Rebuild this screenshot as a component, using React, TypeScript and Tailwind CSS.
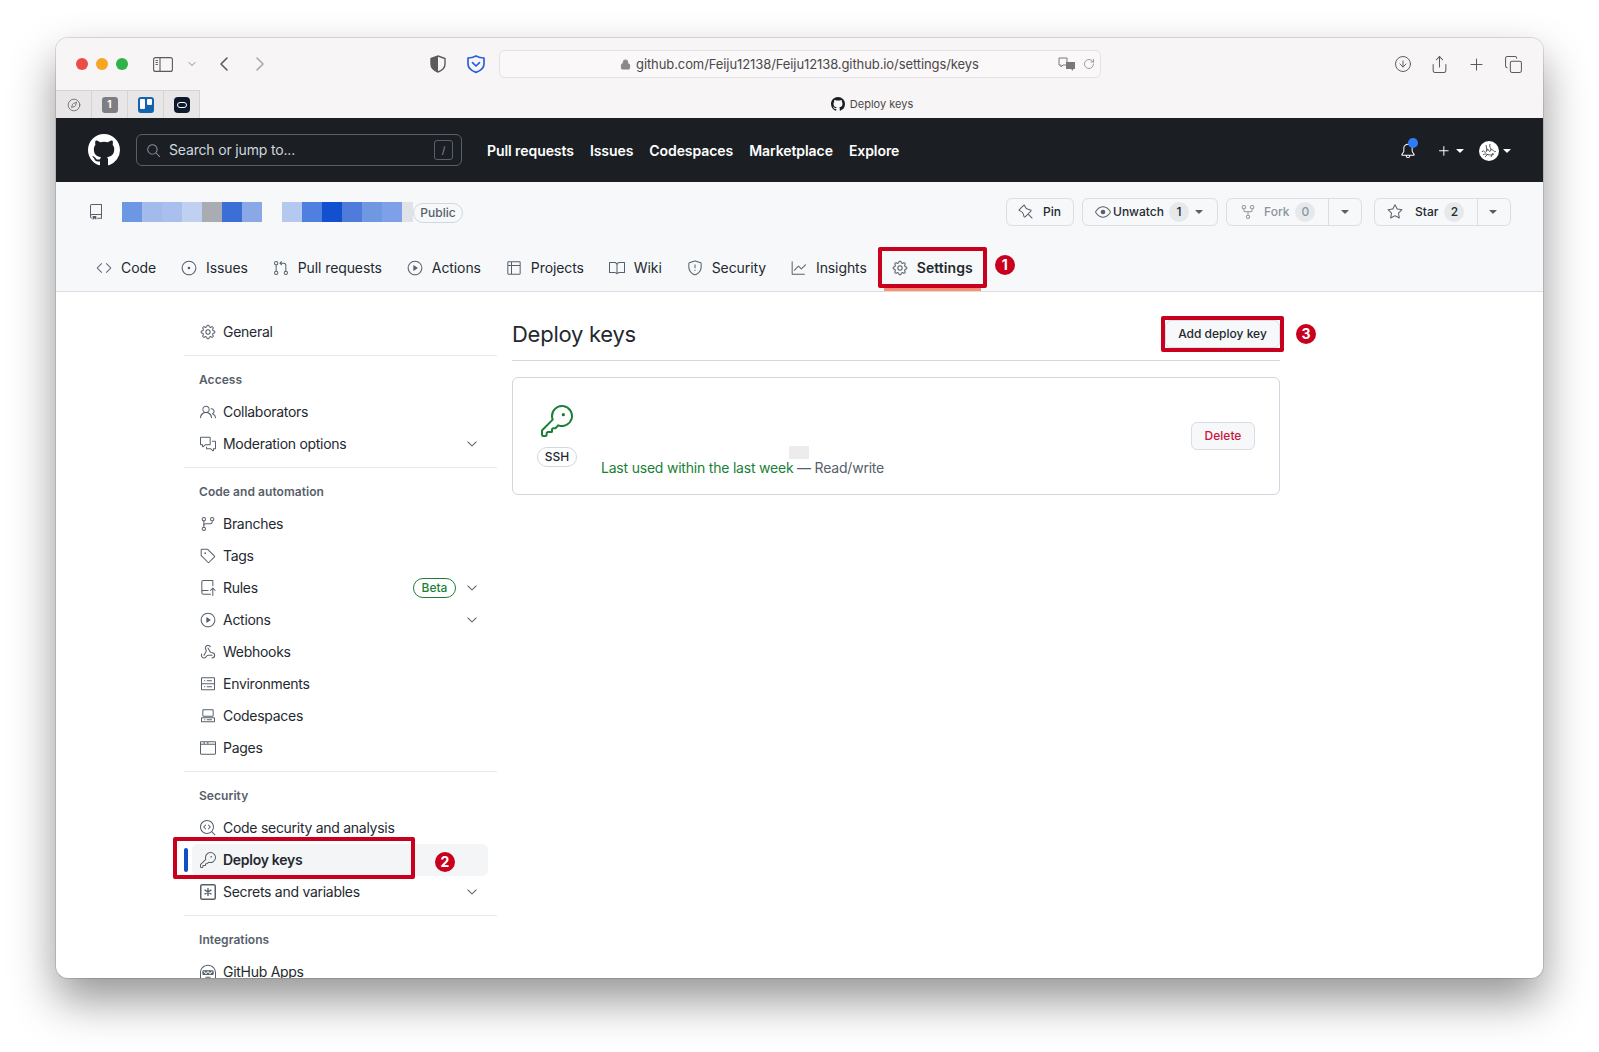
import type { ElementType, ReactNode } from "react";
import { ChevronLeft, ChevronRight, ChevronDown, CircleArrowDown, Share, Plus, Copy, Lock, RotateCw, Compass, Webhook } from "lucide-react";
import {
  GoSearch, GoBell, GoPlus, GoTriangleDown, GoRepo, GoPin, GoEye, GoRepoForked, GoStar,
  GoCode, GoIssueOpened, GoGitPullRequest, GoPlay, GoTable, GoBook, GoShield, GoGraph, GoGear,
  GoPeople, GoCommentDiscussion, GoGitBranch, GoTag, GoRepoPush, GoServer, GoCodespaces, GoBrowser,
  GoCodescan, GoKey, GoHubot, GoChevronDown,
} from "react-icons/go";

const blurOne = ["bg-[#6d97e2]", "bg-[#a3bbea]", "bg-[#a9c0ee]", "bg-[#c0d0f0]", "bg-[#a9adb3]", "bg-[#3c6fd6]", "bg-[#8aa8e6]"];
const blurTwo = ["bg-[#b4c8f0]", "bg-[#4f7fdf]", "bg-[#1350d0]", "bg-[#4f7bdb]", "bg-[#6f97e2]", "bg-[#7da0e8]"];

const tabs = [
  { label: "Code", icon: GoCode },
  { label: "Issues", icon: GoIssueOpened },
  { label: "Pull requests", icon: GoGitPullRequest },
  { label: "Actions", icon: GoPlay },
  { label: "Projects", icon: GoTable },
  { label: "Wiki", icon: GoBook },
  { label: "Security", icon: GoShield },
  { label: "Insights", icon: GoGraph },
];

function GithubMark({ size, className }: { size: number; className?: string }) {
  return (
    <svg viewBox="0 0 16 16" width={size} height={size} fill="currentColor" className={className}>
      <path d="M8 0C3.58 0 0 3.58 0 8c0 3.54 2.29 6.53 5.47 7.59.4.07.55-.17.55-.38 0-.19-.01-.82-.01-1.49-2.01.37-2.53-.49-2.69-.94-.09-.23-.48-.94-.82-1.13-.28-.15-.68-.52-.01-.53.63-.01 1.08.58 1.23.82.72 1.21 1.87.87 2.33.66.07-.52.28-.87.51-1.07-1.78-.2-3.64-.89-3.64-3.95 0-.87.31-1.59.82-2.15-.08-.2-.36-1.02.08-2.12 0 0 .67-.21 2.2.82.64-.18 1.32-.27 2-.27.68 0 1.36.09 2 .27 1.53-1.04 2.2-.82 2.2-.82.44 1.1.16 1.92.08 2.12.51.56.82 1.27.82 2.15 0 3.07-1.87 3.75-3.65 3.95.29.25.54.73.54 1.48 0 1.07-.01 1.93-.01 2.2 0 .21.15.46.55.38A8.013 8.013 0 0016 8c0-4.42-3.58-8-8-8z" />
    </svg>
  );
}

function KeyAsterisk({ size, className }: { size: number; className?: string }) {
  return (
    <svg viewBox="0 0 16 16" width={size} height={size} fill="none" stroke="currentColor" className={className}>
      <rect x="0.75" y="0.75" width="14.5" height="14.5" rx="1.5" strokeWidth="1.5" />
      <path d="M8 4.5v7M5 6.2l6 3.6M11 6.2l-6 3.6" strokeWidth="1.4" strokeLinecap="round" />
    </svg>
  );
}

function WebhookIcon({ size, className }: { size: number; className?: string }) {
  return <Webhook size={size} strokeWidth={1.6} className={className} />;
}

function Badge({ n, className }: { n: number; className: string }) {
  return (
    <span className={`absolute flex h-5 w-5 items-center justify-center rounded-full bg-[#c8001e] text-[14px] leading-none font-bold tracking-normal text-white ${className}`}>
      {n}
    </span>
  );
}

function Counter({ n, muted }: { n: number; muted?: boolean }) {
  return (
    <span className={`flex h-5 w-5 items-center justify-center rounded-full bg-[#e6e9ec] text-[12px] font-medium ${muted ? "text-[#8c959f]" : "text-[#24292f]"}`}>
      {n}
    </span>
  );
}

function SideRow({ icon: Icon, label, chevron, beta }: { icon: ElementType; label: string; chevron?: boolean; beta?: boolean }) {
  return (
    <div className="mr-[9px] ml-2 flex h-8 items-center gap-[7px] px-2 text-[14px] tracking-[-0.02em] text-[#24292f]">
      <Icon size={16} className="shrink-0 text-[#57606a]" />
      <span className="-mt-[2px]">{label}</span>
      {beta && (
        <span className="ml-auto flex h-5 w-[43px] items-center justify-center rounded-full border border-[#1a7f37] text-[12px] font-medium tracking-normal text-[#1a7f37]">Beta</span>
      )}
      {chevron && <GoChevronDown size={16} className={`${beta ? "ml-[1px]" : "ml-auto"} shrink-0 text-[#57606a]`} />}
    </div>
  );
}

function SideGroup({ title, children, last }: { title?: string; children: ReactNode; last?: boolean }) {
  return (
    <div className={last ? "" : "border-b border-[#e6e9ec] pb-[7px]"}>
      {title && <div className="ml-2 h-10 pt-[14px] pl-[7px] text-[12px] leading-[20px] font-semibold tracking-[0.005em] text-[#57606a]">{title}</div>}
      {children}
    </div>
  );
}

export default function App() {
  return (
    <div className="min-h-[1052px] bg-white pt-[38px] pl-[56px] font-['Inter','Liberation_Sans',sans-serif] antialiased">
      <div className="h-[940px] w-[1487px] overflow-hidden rounded-[12px] bg-white shadow-[0_22px_45px_rgba(0,0,0,0.42),0_0_0_1px_rgba(0,0,0,0.12)]">
        {/* safari toolbar */}
        <div className="flex h-[52px] items-center bg-[#f8f5f6] text-[#5c5a5b]">
          <div className="ml-5 flex gap-2">
            <span className="h-3 w-3 rounded-full bg-[#ee4b47]" />
            <span className="h-3 w-3 rounded-full bg-[#f5a623]" />
            <span className="h-3 w-3 rounded-full bg-[#2fb344]" />
          </div>
          <svg viewBox="0 0 20 15" fill="none" stroke="currentColor" className="ml-[25px] h-[15px] w-5">
            <rect x="0.6" y="0.6" width="18.8" height="13.8" rx="2" strokeWidth="1.1" />
            <path d="M7 0.6v13.8" strokeWidth="1.1" />
            <path d="M2.5 3.5h2.5M2.5 5.5h2.5M2.5 7.5h2.5" strokeWidth="0.9" />
          </svg>
          <ChevronDown size={12} strokeWidth={2} className="ml-[13px] text-[#8a8889]" />
          <ChevronLeft size={24} strokeWidth={1.6} className="ml-[14px]" />
          <ChevronRight size={24} strokeWidth={1.6} className="ml-[12px] text-[#a9a7a8]" />
          <svg viewBox="0 0 16 18" className="ml-[158px] h-[18px] w-4">
            <path d="M8 1 L15 3.5 V9 C15 13 12 15.5 8 17 C4 15.5 1 13 1 9 V3.5 Z" fill="none" stroke="#5c5a5b" strokeWidth="1.4" />
            <path d="M8 1 L1 3.5 V9 C1 13 4 15.5 8 17 Z" fill="#5c5a5b" />
          </svg>
          <svg viewBox="0 0 20 20" className="ml-[20px] h-5 w-5">
            <path d="M10 2 C13 3.6 15.5 4 18 4 V10 C18 14 14.5 16.8 10 18.4 C5.5 16.8 2 14 2 10 V4 C4.5 4 7 3.6 10 2 Z" fill="none" stroke="#2b5fd9" strokeWidth="1.7" strokeLinejoin="round" />
            <path d="M6.5 8.6 L10 12 L13.5 8.6" fill="none" stroke="#2b5fd9" strokeWidth="1.7" strokeLinecap="round" strokeLinejoin="round" />
          </svg>
          <div className="ml-[13px] flex h-[28px] w-[602px] shrink-0 items-center rounded-[6px] border border-[#e4e1e2] bg-[#faf8f8] text-[13px] tracking-[-0.007em] text-[#4a4849]">
            <Lock size={11} fill="#8a8889" className="ml-[120px] text-[#8a8889]" />
            <span className="mt-[2px] ml-[5px]">github.com/Feiju12138/Feiju12138.github.io/settings/keys</span>
            <svg viewBox="0 0 20 16" className="ml-auto h-4 w-5 text-[#7a7879]">
              <path d="M2 2 H10 V9 H6 L4 11 V9 H2 Z" fill="none" stroke="currentColor" strokeWidth="1" />
              <path d="M9 6 H18 V13 H16 V15 L14 13 H9 Z" fill="currentColor" />
            </svg>
            <RotateCw size={12} strokeWidth={1.4} className="mr-[5px] ml-[6px] text-[#7a7879]" />
          </div>
          <CircleArrowDown size={18} strokeWidth={1.3} className="ml-[293px]" />
          <Share size={19} strokeWidth={1.3} className="ml-[18px]" />
          <Plus size={19} strokeWidth={1.3} className="ml-[18px]" />
          <Copy size={19} strokeWidth={1.3} className="ml-[18px]" />
        </div>

        {/* favourites + tab title */}
        <div className="flex h-[28px] bg-[#f8f5f6]">
          <div className="flex">
            <div className="flex w-9 items-center justify-center border-t border-r border-[#d6d3d4] bg-[#e8e6e6]">
              <Compass size={14} strokeWidth={1.3} className="text-[#5c5a5b]" />
            </div>
            <div className="flex w-9 items-center justify-center border-t border-r border-[#d6d3d4] bg-[#e8e6e6]">
              <span className="flex h-4 w-4 items-center justify-center rounded-[3px] bg-[#7e7e82] text-[10px] font-bold text-white">1</span>
            </div>
            <div className="flex w-9 items-center justify-center border-t border-r border-[#d6d3d4] bg-[#e8e6e6]">
              <span className="flex h-4 w-4 gap-[2px] rounded-[3px] bg-[#1264b0] p-[2px]">
                <span className="h-[10px] w-[5px] rounded-[1px] bg-white" />
                <span className="h-[6px] w-[5px] rounded-[1px] bg-white" />
              </span>
            </div>
            <div className="flex w-9 items-center justify-center border-t border-r border-[#d6d3d4] bg-[#e8e6e6]">
              <span className="flex h-4 w-4 items-center justify-center rounded-[4px] bg-[#0e1a2b]">
                <span className="h-[6px] w-[10px] rounded-full border border-white" />
              </span>
            </div>
          </div>
          <div className="flex flex-1 items-center justify-center gap-[5px] pl-[1px] text-[11px] text-[#4a4849]">
            <GithubMark size={14} className="text-[#1b1f24]" />
            <span>Deploy keys</span>
          </div>
        </div>

        {/* github header */}
        <header className="flex h-16 items-center bg-[#1b1f24] px-8 text-white">
          <GithubMark size={32} className="shrink-0" />
          <div className="ml-4 flex h-8 w-[326px] items-center rounded-[6px] border border-[#57606a] pr-[8px] pl-[9px] text-[14px] tracking-[-0.012em] text-[#d0d7de]">
            <GoSearch size={15} className="text-[#8c959f]" />
            <span className="-mt-[2px] ml-2">Search or jump to...</span>
            <span className="ml-auto flex h-5 w-[19px] items-center justify-center rounded-[3px] border border-[#57606a] text-[10px] text-[#8c959f]">/</span>
          </div>
          <nav className="ml-[25px] flex gap-4 text-[14px] font-semibold tracking-[-0.005em]">
            <span>Pull requests</span>
            <span>Issues</span>
            <span>Codespaces</span>
            <span>Marketplace</span>
            <span>Explore</span>
          </nav>
          <div className="-mr-[3px] ml-auto flex items-center pt-[2px]">
            <span className="relative">
              <GoBell size={16} />
              <span className="absolute -top-[5px] left-[8px] h-[10px] w-[10px] rounded-full bg-[#2f7cf6]" />
            </span>
            <GoPlus size={16} className="ml-[20px]" />
            <GoTriangleDown size={14} className="ml-[1px]" />
            <span className="ml-[12px] flex h-5 w-5 items-center justify-center rounded-full bg-white">
              <svg viewBox="0 0 20 20" className="h-5 w-5">
                <path d="M3 11 C5 7 6 15 8 9 C9 5 10 14 12 9 C13 6 15 13 17 10 M4 14 C7 11 10 16 15 13 M7 4 L8 10 M11 3 C10 6 12 7 12 9 M6 16 L9 13 M12 16 L14 12" fill="none" stroke="#444" strokeWidth="0.9" />
              </svg>
            </span>
            <GoTriangleDown size={14} className="ml-[1px]" />
          </div>
        </header>

        {/* repo head */}
        <div className="h-[110px] border-b border-[#d8dee4] bg-[#f6f8fa] px-8 pt-4">
          <div className="flex items-start">
            <GoRepo size={16} className="mt-[6px] shrink-0 text-[#57606a]" />
            <div className="mt-1 ml-[18px] flex">
              {blurOne.map((c) => (
                <span key={c} className={`h-5 w-5 ${c}`} />
              ))}
            </div>
            <div className="mt-1 ml-5 flex">
              {blurTwo.map((c) => (
                <span key={c} className={`h-5 w-5 ${c}`} />
              ))}
              <span className="h-5 w-[11px] bg-[#dfe3e8]" />
            </div>
            <span className="mt-[5px] flex h-5 w-[50px] items-center justify-center rounded-full border border-[#d0d7de] text-[12px] font-medium text-[#57606a]">Public</span>
            <div className="ml-auto flex text-[12px] font-medium text-[#24292f]">
              <div className="flex h-7 w-[68px] items-center rounded-[6px] border border-[#d8dee4] pl-[11px]">
                <GoPin size={16} className="text-[#57606a]" />
                <span className="ml-[9px]">Pin</span>
              </div>
              <div className="ml-2 flex h-7 w-[136px] items-center rounded-[6px] border border-[#d8dee4] pl-[12px]">
                <GoEye size={16} className="text-[#57606a]" />
                <span className="ml-[2px]">Unwatch</span>
                <span className="ml-[5px]"><Counter n={1} /></span>
                <GoTriangleDown size={14} className="ml-[3px] text-[#57606a]" />
              </div>
              <div className="ml-2 flex h-7 w-[136px] items-center rounded-[6px] border border-[#d8dee4]">
                <div className="flex h-full w-[102px] items-center border-r border-[#d8dee4] pl-[13px] text-[#8c959f]">
                  <GoRepoForked size={16} />
                  <span className="ml-2">Fork</span>
                  <span className="ml-[6px]"><Counter n={0} muted /></span>
                </div>
                <GoTriangleDown size={14} className="ml-[9px] text-[#57606a]" />
              </div>
              <div className="ml-3 flex h-7 w-[137px] items-center rounded-[6px] border border-[#d8dee4]">
                <div className="flex h-full w-[103px] items-center border-r border-[#d8dee4] pl-[12px]">
                  <GoStar size={16} className="text-[#57606a]" />
                  <span className="ml-[12px]">Star</span>
                  <span className="ml-[6px]"><Counter n={2} /></span>
                </div>
                <GoTriangleDown size={14} className="ml-2 text-[#57606a]" />
              </div>
            </div>
          </div>
          <nav className="mt-[26px] flex gap-[9px] text-[14px] tracking-[-0.007em] text-[#24292f]">
            {tabs.map(({ label, icon: Icon }) => (
              <div key={label} className="flex h-8 items-center gap-[9px] px-2">
                <Icon size={16} className="text-[#57606a]" />
                <span className="-mt-[2px]">{label}</span>
              </div>
            ))}
            <div className="relative flex h-8 items-center gap-[9px] px-2 font-semibold tracking-[0.005em]">
              <GoGear size={16} className="text-[#57606a]" />
              <span className="-mt-[2px]">Settings</span>
              <span className="absolute inset-x-0 -bottom-[7px] h-[3px] bg-[#fd8c73]" />
              <span className="absolute -inset-x-[6px] -top-[5px] -bottom-[4px] rounded-[2px] border-4 border-[#c8001e]" />
              <Badge n={1} className="top-[3px] left-[calc(100%+14px)]" />
            </div>
          </nav>
        </div>

        {/* settings body */}
        <div className="flex pt-6 pl-[128px]">
          <aside className="w-[313px] shrink-0">
            <SideGroup>
              <SideRow icon={GoGear} label="General" />
            </SideGroup>
            <SideGroup title="Access">
              <SideRow icon={GoPeople} label="Collaborators" />
              <SideRow icon={GoCommentDiscussion} label="Moderation options" chevron />
            </SideGroup>
            <SideGroup title="Code and automation">
              <SideRow icon={GoGitBranch} label="Branches" />
              <SideRow icon={GoTag} label="Tags" />
              <SideRow icon={GoRepoPush} label="Rules" chevron beta />
              <SideRow icon={GoPlay} label="Actions" chevron />
              <SideRow icon={WebhookIcon} label="Webhooks" />
              <SideRow icon={GoServer} label="Environments" />
              <SideRow icon={GoCodespaces} label="Codespaces" />
              <SideRow icon={GoBrowser} label="Pages" />
            </SideGroup>
            <SideGroup title="Security">
              <SideRow icon={GoCodescan} label="Code security and analysis" />
              <div className="relative mr-[9px] ml-2 flex h-8 items-center gap-[7px] rounded-[6px] bg-[#f3f5f7] px-2 text-[14px] font-semibold tracking-[-0.02em] text-[#24292f]">
                <span className="absolute top-1 -left-2 h-6 w-1 rounded-full bg-[#0d50c8]" />
                <GoKey size={16} className="shrink-0 text-[#57606a]" />
                <span className="-mt-[2px]">Deploy keys</span>
                <span className="absolute -top-[7px] -left-[19px] h-[42px] w-[242px] rounded-[2px] border-4 border-[#c8001e]" />
                <Badge n={2} className="top-2 left-[243px]" />
              </div>
              <SideRow icon={KeyAsterisk} label="Secrets and variables" chevron />
            </SideGroup>
            <SideGroup title="Integrations" last>
              <SideRow icon={GoHubot} label="GitHub Apps" />
            </SideGroup>
          </aside>

          <main className="ml-[15px] w-[768px]">
            <div className="flex h-[45px] items-start border-b border-[#d0d7de]">
              <h1 className="text-[22px] leading-[37px] font-normal tracking-[-0.012em] text-[#24292f]">Deploy keys</h1>
              <div className="relative mt-1 ml-auto flex h-7 w-[115px] items-center justify-center rounded-[6px] border border-[#d8dee4] bg-[#f6f8fa] text-[12px] font-medium text-[#24292f]">
                Add deploy key
                <span className="absolute -top-[5px] -right-[5px] -bottom-[5px] -left-[5px] rounded-[2px] border-4 border-[#c8001e]" />
                <Badge n={3} className="top-[3px] left-[calc(100%+17px)]" />
              </div>
            </div>
            <div className="mt-4 flex h-[118px] items-center rounded-[6px] border border-[#d0d7de] pr-6 pl-6">
              <div className="flex w-10 shrink-0 flex-col items-center">
                <GoKey size={32} className="text-[#1a7f37]" />
                <span className="mt-[10px] flex h-5 w-10 items-center justify-center rounded-full border border-[#d0d7de] text-[12px] font-medium text-[#24292f]">SSH</span>
              </div>
              <div className="ml-6 flex flex-col justify-end self-stretch pb-4 text-[14px] leading-5 tracking-[-0.015em] text-[#57606a]">
                <span className="ml-[188px] h-[13px] w-5 bg-[#ececec]" />
                <span className="-mt-px">
                  <span className="text-[#1a7f37]">Last used within the last week</span> — Read/write
                </span>
              </div>
              <div className="ml-auto flex h-7 w-16 items-center justify-center rounded-[6px] border border-[#d8dee4] bg-[#f6f8fa] text-[12px] font-medium text-[#c9153a]">
                Delete
              </div>
            </div>
          </main>
        </div>
      </div>
    </div>
  );
}
